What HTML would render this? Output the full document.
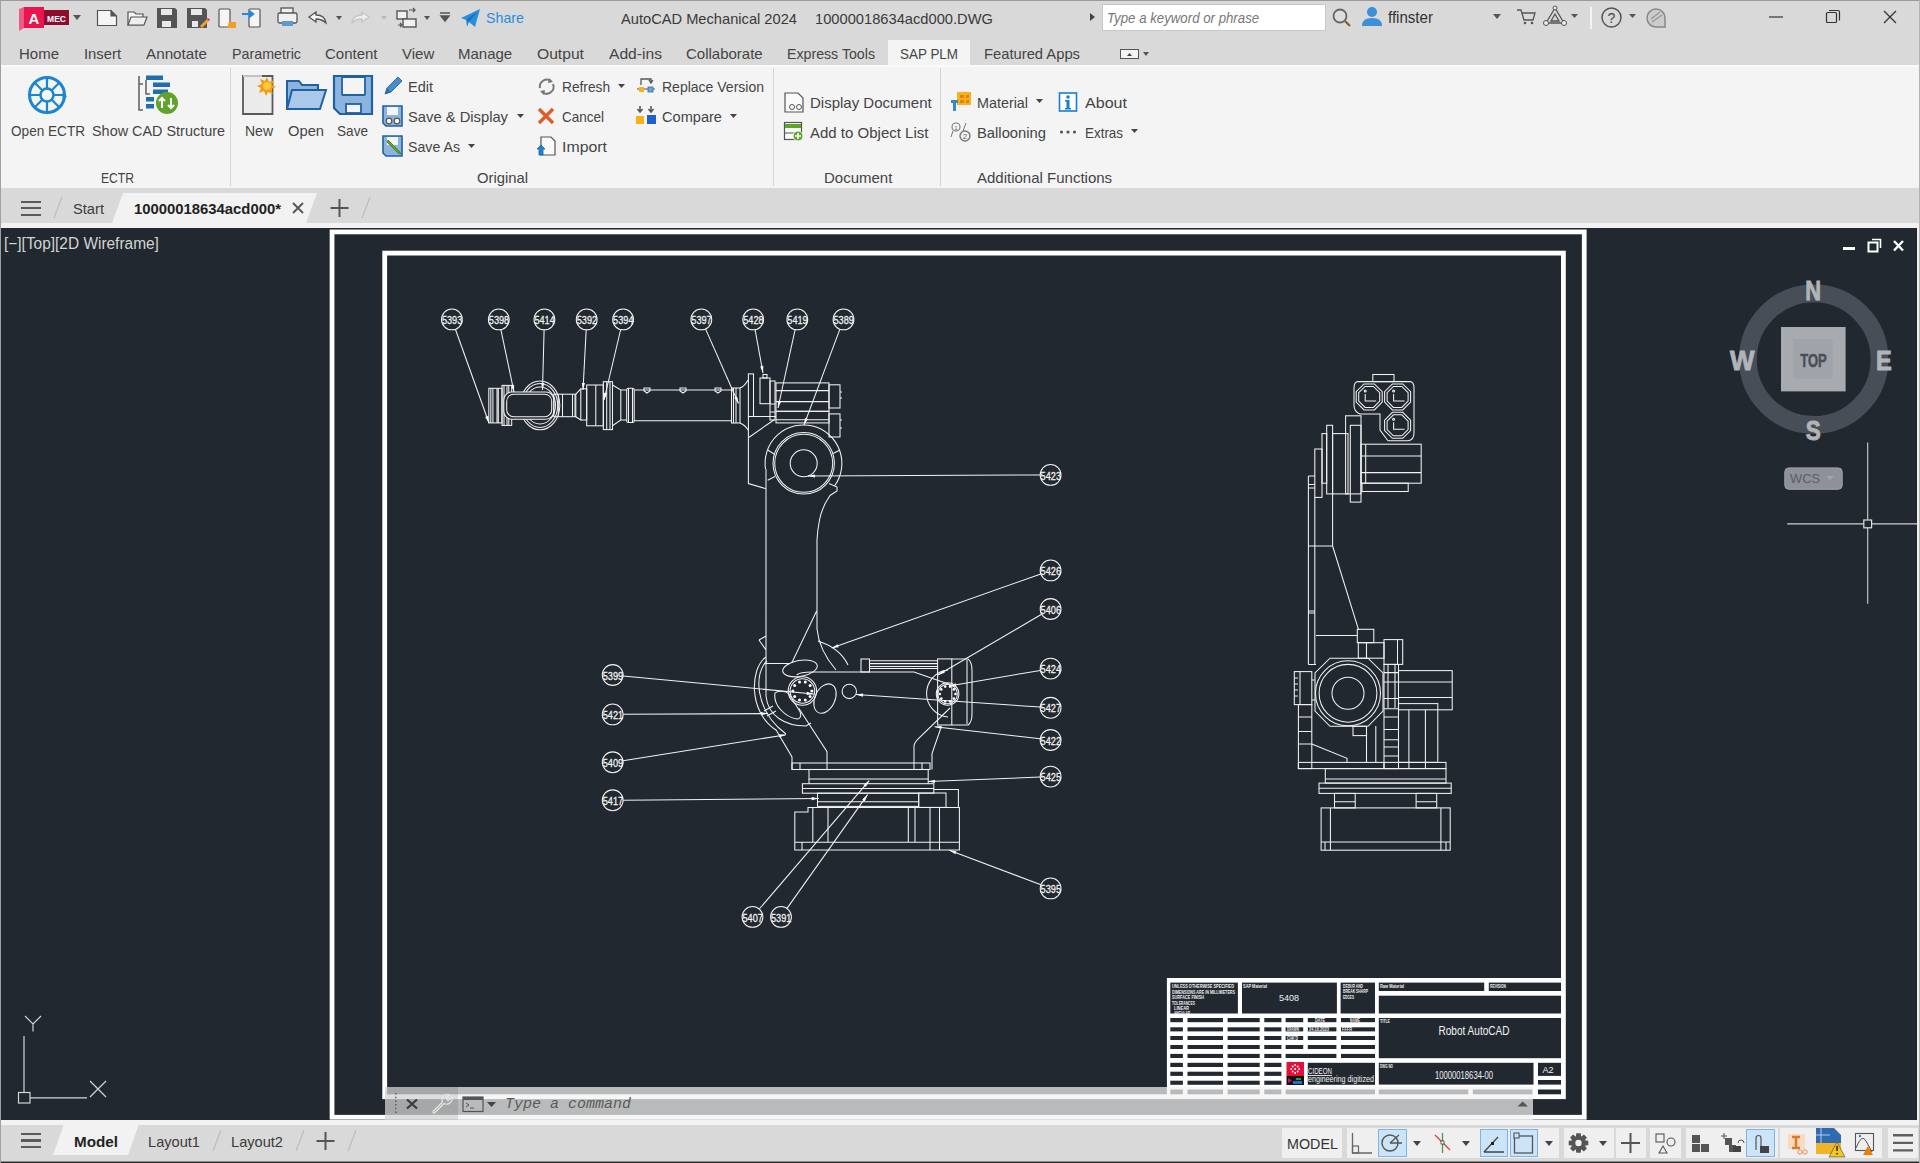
<!DOCTYPE html>
<html><head><meta charset="utf-8">
<style>
*{margin:0;padding:0;box-sizing:border-box}
html,body{width:1920px;height:1163px;overflow:hidden;background:#d9d9d9;font-family:"Liberation Sans",sans-serif}
.t{position:absolute;white-space:nowrap;line-height:1}
.blk{position:absolute}
.ic{position:absolute;overflow:visible}
</style></head><body>
<div class="blk" style="left:0;top:0;width:1920px;height:65px;background:#d9d9d9"></div><div class="blk" style="left:0;top:0;width:1920px;height:1px;background:#9a9a9a"></div><svg class="ic" style="left:18px;top:6px" width="66" height="26" viewBox="0 0 66 26">
<path d="M1 3 L6 1 L6 22 L1 25 Z" fill="#ef5b85"/>
<rect x="6" y="1" width="20" height="21" fill="#e8154f"/>
<rect x="26" y="4" width="25" height="15" fill="#8e0c2e"/>
<text x="16" y="17.5" font-family="Liberation Sans" font-weight="bold" font-size="15" fill="#fff" text-anchor="middle">A</text>
<text x="38.5" y="15.5" font-family="Liberation Sans" font-weight="bold" font-size="8.5" fill="#fff" text-anchor="middle">MEC</text>
<path d="M55 9 L63 9 L59 14 Z" fill="#555"/>
</svg><svg class="ic" style="left:90px;top:4px" width="460" height="30" viewBox="90 4 460 30">
<g stroke="#555" stroke-width="1.2" fill="#f5f5f5">
<path d="M97.5 10.5 H111 L116.5 16 V25.5 H97.5 Z"/>
<path d="M111 10.5 V16 H116.5" fill="#555"/>
<path d="M128 12 H134 L136 14 H143 V25 H128 Z" fill="#f5f5f5"/>
<path d="M128 25 L131 17 H147 L144 25 Z" fill="#eee"/>
</g>
<g fill="#555">
<path d="M157 8 H175 L177 10 V28 H157 Z"/>
<rect x="161" y="9" width="11" height="6" fill="#e9e9e9"/>
<rect x="162" y="21" width="9" height="6" fill="#e9e9e9"/>
<path d="M187 8 H205 L207 10 V28 H187 Z"/>
<rect x="191" y="9" width="11" height="6" fill="#e9e9e9"/>
<rect x="192" y="21" width="6" height="6" fill="#e9e9e9"/>
<path d="M200 26 L207 19 L209 21 L202 28 Z" fill="#f0a030"/>
<path d="M206 18 L209 21 L210 19 Z" fill="#e8154f"/>
</g>
<g stroke="#555" stroke-width="1.2" fill="#f5f5f5">
<rect x="219" y="9" width="11" height="18" rx="1"/>
<rect x="249" y="9" width="11" height="18" rx="1"/>
</g>
<path d="M229 22 H236 V28 H227 Z" fill="#f0a020"/>
<path d="M242 14 H252 M249 11 L253 14 L249 17" stroke="#1e88e5" stroke-width="2.2" fill="none"/>
<g stroke="#555" stroke-width="1.3" fill="#f0f0f0">
<rect x="281" y="8" width="12" height="6"/>
<rect x="278" y="13" width="19" height="10" rx="1.5"/>
</g>
<rect x="282" y="21" width="11" height="5" fill="#5b9bd5"/>
<path d="M309 17 L316 12 V15 Q325 15 326 23 Q322 19 316 19 V22 Z" stroke="#555" stroke-width="1.3" fill="#f5f5f5"/>
<path d="M336 16 H342 L339 20 Z" fill="#555"/>
<path d="M369 17 L362 12 V15 Q353 15 352 23 Q356 19 362 19 V22 Z" stroke="#c4c4c4" stroke-width="1.3" fill="#eee"/>
<path d="M381 16 H387 L384 20 Z" fill="#bbb"/>
<g stroke="#555" stroke-width="1.4" fill="#f0f0f0">
<rect x="397" y="11" width="10" height="8"/>
<rect x="403" y="19" width="13" height="8"/>
</g>
<path d="M409 10 H415 M413 8 L415 10 L413 12 M398 25 H402 M400 23 L402 25 L400 27" stroke="#555" stroke-width="1.2" fill="none"/>
<path d="M424 16 H430 L427 20 Z" fill="#555"/>
<path d="M440 13 H450 M441 16 H449 L445 21 Z" stroke="#555" stroke-width="1.5" fill="#555"/>
<path d="M461 18 L480 9 L475 27 L469 22 L467 27 L466 20 Z" fill="#2a8ee0"/>
<path d="M466 20 L478 11 L469 22" fill="#1f6fb5"/>
</g>
</svg><div class="t" style="left:486.0px;top:10.3px;font-size:15px;color:#2b8de0;font-family:'Liberation Sans',sans-serif;transform:scaleX(0.949);transform-origin:0 0;">Share</div>
<div class="t" style="left:621.0px;top:11.1px;font-size:15px;color:#3a3a3a;font-family:'Liberation Sans',sans-serif;transform:scaleX(0.977);transform-origin:0 0;">AutoCAD Mechanical 2024</div>
<div class="t" style="left:815.0px;top:11.1px;font-size:15px;color:#3a3a3a;font-family:'Liberation Sans',sans-serif;transform:scaleX(0.979);transform-origin:0 0;">10000018634acd000.DWG</div>
<svg class="ic" style="left:1088px;top:10px" width="10" height="14"><path d="M2 3 L7 7 L2 11 Z" fill="#444"/></svg><div class="blk" style="left:1102px;top:4px;width:224px;height:27px;background:#fff;border:1px solid #c8c8c8"></div><div class="t" style="left:1107.0px;top:11.1px;font-size:14px;color:#777;font-family:'Liberation Sans',sans-serif;font-style:italic;transform:scaleX(0.946);transform-origin:0 0;">Type a keyword or phrase</div>
<svg class="ic" style="left:1330px;top:5px" width="260" height="28" viewBox="1330 5 260 28">
<circle cx="1340" cy="16" r="6.5" stroke="#666" stroke-width="1.8" fill="#ddd"/>
<path d="M1345 21 L1350 26" stroke="#8a5a2a" stroke-width="2.2"/>
<circle cx="1372" cy="12" r="5" fill="#3d8fd6"/>
<path d="M1362 26 Q1362 18 1372 18 Q1382 18 1382 26 Z" fill="#3d8fd6"/>
<path d="M1493 14 H1501 L1497 19 Z" fill="#555"/>
<path d="M1517 10 H1521 L1524 20 H1533 L1535 13 H1522" stroke="#555" stroke-width="1.3" fill="none"/>
<circle cx="1525" cy="23" r="1.3" fill="#555"/><circle cx="1532" cy="23" r="1.3" fill="#555"/>
<path d="M1555 8 L1546 23 H1564 Z M1555 14 L1551 21 H1559 Z" stroke="#555" stroke-width="1.3" fill="none"/>
<circle cx="1555" cy="8" r="2" fill="#eee" stroke="#555"/><circle cx="1546" cy="23" r="2.5" fill="#eee" stroke="#555"/><circle cx="1564" cy="23" r="2.5" fill="#eee" stroke="#555"/>
<path d="M1571 14 H1578 L1574.5 18 Z" fill="#555"/>
</svg><div class="t" style="left:1388.0px;top:9.5px;font-size:16px;color:#333;font-family:'Liberation Sans',sans-serif;transform:scaleX(0.942);transform-origin:0 0;">ffinster</div>
<div class="blk" style="left:1590px;top:7px;width:2px;height:22px;background:#f2f2f2"></div><svg class="ic" style="left:1598px;top:4px" width="80" height="28" viewBox="1598 4 80 28">
<circle cx="1611.5" cy="17.5" r="9.5" stroke="#555" stroke-width="1.5" fill="none"/>
<text x="1611.5" y="22.5" font-family="Liberation Sans" font-size="14" fill="#444" text-anchor="middle">?</text>
<path d="M1629 14 H1636 L1632.5 18 Z" fill="#555"/>
<path d="M1647 18 A9 9 0 1 1 1665 18 V27 H1656 A9 9 0 0 1 1647 18 Z" stroke="#888" stroke-width="1.5" fill="#ccc"/>
<path d="M1651 19 L1660 12 M1652 22 L1662 15" stroke="#999" stroke-width="1.5"/>
</svg><svg class="ic" style="left:1760px;top:6px" width="150" height="24" viewBox="1760 6 150 24">
<path d="M1769 17 H1783" stroke="#333" stroke-width="1.2"/>
<rect x="1826.5" y="12.5" width="10" height="10" stroke="#333" stroke-width="1.2" fill="none" rx="1"/>
<path d="M1829 10.5 H1838 Q1839.5 10.5 1839.5 12 V20.5" stroke="#333" stroke-width="1.2" fill="none"/>
<path d="M1884 11 L1896 23 M1896 11 L1884 23" stroke="#333" stroke-width="1.3"/>
</svg><div class="blk" style="left:888px;top:40px;width:82px;height:26px;background:#f4f4f4"></div><div class="t" style="left:19.0px;top:45.8px;font-size:15px;color:#444;font-family:'Liberation Sans',sans-serif;">Home</div>
<div class="t" style="left:84.0px;top:45.8px;font-size:15px;color:#444;font-family:'Liberation Sans',sans-serif;transform:scaleX(0.986);transform-origin:0 0;">Insert</div>
<div class="t" style="left:146.0px;top:45.8px;font-size:15px;color:#444;font-family:'Liberation Sans',sans-serif;transform:scaleX(1.016);transform-origin:0 0;">Annotate</div>
<div class="t" style="left:232.0px;top:45.8px;font-size:15px;color:#444;font-family:'Liberation Sans',sans-serif;transform:scaleX(0.951);transform-origin:0 0;">Parametric</div>
<div class="t" style="left:325.0px;top:45.8px;font-size:15px;color:#444;font-family:'Liberation Sans',sans-serif;">Content</div>
<div class="t" style="left:402.0px;top:45.8px;font-size:15px;color:#444;font-family:'Liberation Sans',sans-serif;">View</div>
<div class="t" style="left:458.0px;top:45.8px;font-size:15px;color:#444;font-family:'Liberation Sans',sans-serif;">Manage</div>
<div class="t" style="left:537.0px;top:45.8px;font-size:15px;color:#444;font-family:'Liberation Sans',sans-serif;transform:scaleX(1.043);transform-origin:0 0;">Output</div>
<div class="t" style="left:609.0px;top:45.8px;font-size:15px;color:#444;font-family:'Liberation Sans',sans-serif;transform:scaleX(1.042);transform-origin:0 0;">Add-ins</div>
<div class="t" style="left:686.0px;top:45.8px;font-size:15px;color:#444;font-family:'Liberation Sans',sans-serif;">Collaborate</div>
<div class="t" style="left:787.0px;top:45.8px;font-size:15px;color:#444;font-family:'Liberation Sans',sans-serif;transform:scaleX(0.945);transform-origin:0 0;">Express Tools</div>
<div class="t" style="left:900.0px;top:45.8px;font-size:15px;color:#444;font-family:'Liberation Sans',sans-serif;transform:scaleX(0.896);transform-origin:0 0;">SAP PLM</div>
<div class="t" style="left:984.0px;top:45.8px;font-size:15px;color:#444;font-family:'Liberation Sans',sans-serif;transform:scaleX(0.984);transform-origin:0 0;">Featured Apps</div>
<svg class="ic" style="left:1118px;top:47px" width="36" height="14" viewBox="1118 46 36 14">
<rect x="1120.5" y="48.5" width="18" height="9" stroke="#555" stroke-width="1" fill="#f4f4f4"/>
<path d="M1127 55 L1129.5 52 L1132 55 Z" fill="#444"/>
<path d="M1143 51 H1149 L1146 55 Z" fill="#555"/>
</svg><div class="blk" style="left:0;top:65px;width:1920px;height:123px;background:#f4f4f4"></div><div class="blk" style="left:0;top:65px;width:1920px;height:2px;background:#fafafa"></div><div class="blk" style="left:230px;top:68px;width:1px;height:118px;background:#d4d4d4"></div><div class="blk" style="left:773px;top:68px;width:1px;height:118px;background:#d4d4d4"></div><div class="blk" style="left:940px;top:68px;width:1px;height:118px;background:#d4d4d4"></div><div class="t" style="left:10.5px;top:123.3px;font-size:15px;color:#444;font-family:'Liberation Sans',sans-serif;transform:scaleX(0.906);transform-origin:0 0;">Open ECTR</div>
<div class="t" style="left:92.0px;top:123.3px;font-size:15px;color:#444;font-family:'Liberation Sans',sans-serif;transform:scaleX(0.961);transform-origin:0 0;">Show CAD Structure</div>
<div class="t" style="left:101.0px;top:170.3px;font-size:15px;color:#444;font-family:'Liberation Sans',sans-serif;transform:scaleX(0.809);transform-origin:0 0;">ECTR</div>
<div class="t" style="left:245.0px;top:123.3px;font-size:15px;color:#444;font-family:'Liberation Sans',sans-serif;transform:scaleX(0.933);transform-origin:0 0;">New</div>
<div class="t" style="left:288.0px;top:123.3px;font-size:15px;color:#444;font-family:'Liberation Sans',sans-serif;transform:scaleX(0.981);transform-origin:0 0;">Open</div>
<div class="t" style="left:337.0px;top:123.3px;font-size:15px;color:#444;font-family:'Liberation Sans',sans-serif;transform:scaleX(0.907);transform-origin:0 0;">Save</div>
<div class="t" style="left:408.0px;top:78.8px;font-size:15px;color:#444;font-family:'Liberation Sans',sans-serif;transform:scaleX(0.967);transform-origin:0 0;">Edit</div>
<div class="t" style="left:408.0px;top:108.8px;font-size:15px;color:#444;font-family:'Liberation Sans',sans-serif;transform:scaleX(0.983);transform-origin:0 0;">Save &amp; Display</div>
<div class="t" style="left:408.0px;top:138.8px;font-size:15px;color:#444;font-family:'Liberation Sans',sans-serif;transform:scaleX(0.945);transform-origin:0 0;">Save As</div>
<div class="t" style="left:562.0px;top:78.8px;font-size:15px;color:#444;font-family:'Liberation Sans',sans-serif;transform:scaleX(0.914);transform-origin:0 0;">Refresh</div>
<div class="t" style="left:562.0px;top:108.8px;font-size:15px;color:#444;font-family:'Liberation Sans',sans-serif;transform:scaleX(0.900);transform-origin:0 0;">Cancel</div>
<div class="t" style="left:562.0px;top:138.8px;font-size:15px;color:#444;font-family:'Liberation Sans',sans-serif;transform:scaleX(1.058);transform-origin:0 0;">Import</div>
<div class="t" style="left:662.0px;top:78.8px;font-size:15px;color:#444;font-family:'Liberation Sans',sans-serif;transform:scaleX(0.934);transform-origin:0 0;">Replace Version</div>
<div class="t" style="left:662.0px;top:108.8px;font-size:15px;color:#444;font-family:'Liberation Sans',sans-serif;transform:scaleX(0.972);transform-origin:0 0;">Compare</div>
<div class="t" style="left:477.0px;top:170.3px;font-size:15px;color:#444;font-family:'Liberation Sans',sans-serif;transform:scaleX(0.987);transform-origin:0 0;">Original</div>
<div class="t" style="left:810.0px;top:94.8px;font-size:15px;color:#444;font-family:'Liberation Sans',sans-serif;">Display Document</div>
<div class="t" style="left:810.0px;top:124.8px;font-size:15px;color:#444;font-family:'Liberation Sans',sans-serif;">Add to Object List</div>
<div class="t" style="left:824.0px;top:170.3px;font-size:15px;color:#444;font-family:'Liberation Sans',sans-serif;">Document</div>
<div class="t" style="left:977.0px;top:94.8px;font-size:15px;color:#444;font-family:'Liberation Sans',sans-serif;transform:scaleX(0.956);transform-origin:0 0;">Material</div>
<div class="t" style="left:1085.0px;top:94.8px;font-size:15px;color:#444;font-family:'Liberation Sans',sans-serif;transform:scaleX(1.071);transform-origin:0 0;">About</div>
<div class="t" style="left:977.0px;top:124.8px;font-size:15px;color:#444;font-family:'Liberation Sans',sans-serif;transform:scaleX(0.985);transform-origin:0 0;">Ballooning</div>
<div class="t" style="left:1085.0px;top:124.8px;font-size:15px;color:#444;font-family:'Liberation Sans',sans-serif;transform:scaleX(0.894);transform-origin:0 0;">Extras</div>
<div class="t" style="left:977.0px;top:170.3px;font-size:15px;color:#444;font-family:'Liberation Sans',sans-serif;">Additional Functions</div>
<svg class="ic" style="left:0;top:65px" width="1200" height="123" viewBox="0 65 1200 123"><g stroke="#1a86d0" fill="none">
<circle cx="47" cy="95" r="17.5" stroke-width="3"/>
<circle cx="47" cy="95" r="6.5" stroke-width="2.5"/>
<path d="M47 77 V88 M47 102 V113 M29 95 H40 M54 95 H65 M34.5 82.5 L42 90 M52 100 L59.5 107.5 M59.5 82.5 L52 90 M42 100 L34.5 107.5" stroke-width="2.2"/>
</g>
<path d="M62 93 L67 96 L63 101 Z" fill="#1a86d0"/><g fill="#1f6fae">
<rect x="146" y="75.5" width="17" height="4.5"/>
<rect x="153" y="82.5" width="17" height="4.5"/>
<rect x="153" y="89.5" width="15" height="4.5"/>
<rect x="146" y="97" width="8" height="4.5"/>
<rect x="146" y="104" width="8" height="4.5"/>
</g>
<path d="M139 76 V110 H143 M139 84 H143 M146 80 V94 H150" stroke="#666" stroke-width="1.6" fill="none"/>
<circle cx="167" cy="103" r="11" fill="#5fa329"/>
<path d="M162 108 V98 M159 101 L162 98 L165 101 M171 98 V108 M168 105 L171 108 L174 105" stroke="#fff" stroke-width="2" fill="none"/><path d="M243 76 H272.5 V114 H243 Z" fill="#ebebeb" stroke="#5a5a5a" stroke-width="1.8"/>
<path d="M243 76 H262" stroke="#d0d0d0" stroke-width="1.8"/>
<path d="M267 77 L269 82 L274 80 L272 85 L276 87 L271 89 L273 94 L268 92 L266 96 L264 91 L259 93 L261 88 L257 86 L262 84 L260 79 L265 81 Z" fill="#f49b12"/>
<circle cx="267" cy="86" r="4" fill="#fcc93d"/><path d="M287 85 V109 H318 V85 H302 L299 81 H287 Z" fill="#8db4df" stroke="#1f62a3" stroke-width="2"/>
<path d="M287 109 L292 90 H326 L320 109 Z" fill="#a9c8ea" stroke="#1f62a3" stroke-width="2"/><path d="M334 76 H372 V114 H340 L334 108 Z" fill="#8db4df" stroke="#1f62a3" stroke-width="2.2"/>
<rect x="342" y="77" width="23" height="18" fill="#f4f4f4" stroke="#1f62a3" stroke-width="1.8" rx="1"/>
<rect x="346" y="104" width="15" height="9" fill="#f4f4f4" stroke="#1f62a3" stroke-width="1.8"/><path d="M385 94 L387 88 L398 77 L402 81 L391 92 Z" fill="#4a8ccb" stroke="#2c6fae" stroke-width="1"/>
<path d="M385 94 L387 88 L391 92 Z" fill="#2c6fae"/><path d="M383 106 H402 V126 H386 L383 123 Z" fill="#8db4df" stroke="#1f62a3" stroke-width="1.6"/>
<rect x="387" y="107" width="11" height="8" fill="#f4f4f4"/>
<circle cx="389" cy="121" r="2.8" fill="#f4f4f4" stroke="#555" stroke-width="1.2"/><circle cx="397" cy="121" r="2.8" fill="#f4f4f4" stroke="#555" stroke-width="1.2"/><path d="M517 114 H524 L520.5 118 Z" fill="#444"/><path d="M383 136 H402 V156 H386 L383 153 Z" fill="#8db4df" stroke="#1f62a3" stroke-width="1.6"/>
<rect x="387" y="137" width="11" height="8" fill="#f4f4f4"/>
<path d="M388 140 L399 151 L401 154 L398 153 L387 142 Z" fill="#5fa329" stroke="#3e7a1a" stroke-width="0.8"/><path d="M468 144 H475 L471.5 148 Z" fill="#444"/><path d="M540 88 A7 7 0 0 1 551 81 M553 84 A7 7 0 0 1 542 92" stroke="#777" stroke-width="2" fill="none"/>
<path d="M549 78 L553 82 L548 83 Z M544 95 L540 91 L545 90 Z" fill="#777"/><path d="M618 84 H625 L621.5 88 Z" fill="#444"/><path d="M539 109 L553 123 M553 109 L539 123" stroke="#e05a28" stroke-width="3.2"/><path d="M541 137 H551 L555 141 V155 H541 Z" fill="#fafafa" stroke="#555" stroke-width="1.2"/>
<path d="M537 149 L541 145 L545 149 H543 V155 H539 V149 Z" fill="#1f86cc" stroke="#1662a3" stroke-width="0.8"/><path d="M641 85 V79 H651 V82 M649 80 L651 83 L653 80" stroke="#555" stroke-width="1.3" fill="none"/>
<path d="M637 89 H655" stroke="#555" stroke-width="1"/>
<rect x="639" y="87" width="5" height="5" fill="#f6b21a"/>
<rect x="648" y="87" width="5" height="5" fill="#6aa6cf" stroke="#2c6fae" stroke-width="0.8"/><path d="M640 106 V111 M637.5 109 L640 112 L642.5 109 M651 106 V111 M648.5 109 L651 112 L653.5 109" stroke="#555" stroke-width="1.5" fill="none"/>
<rect x="636" y="116" width="8" height="8" fill="#f6b21a"/>
<rect x="647" y="115" width="9" height="9" fill="#1f5fcf"/><path d="M730 114 H737 L733.5 118 Z" fill="#444"/><path d="M785 93 H798 L803 98 V112 H785 Z" fill="#fafafa" stroke="#555" stroke-width="1.2"/>
<circle cx="792" cy="107" r="2.5" fill="none" stroke="#555" stroke-width="1"/><circle cx="799" cy="107" r="2.5" fill="none" stroke="#555" stroke-width="1"/><rect x="784.5" y="122.5" width="17" height="17" fill="#fafafa" stroke="#555" stroke-width="1.2"/>
<rect x="785" y="124" width="16" height="4" fill="#5fa329"/>
<path d="M785 133 H795" stroke="#555" stroke-width="1"/>
<circle cx="798" cy="136" r="5" fill="#5fa329" stroke="#fafafa" stroke-width="1"/>
<path d="M798 133 V139 M795 136 H801" stroke="#fff" stroke-width="1.6"/><rect x="957" y="92" width="14" height="13" fill="#f6b21a"/>
<path d="M960 95 H964 V98 H960 Z M966 95 H969 V98 H966 Z M960 100 H964 V103 H960 Z M966 100 H969 V103 H966 Z" fill="#e57e14"/>
<path d="M951 100 H958 V103 H956 V111 H953 V103 H951 Z" fill="#3a86c8"/><path d="M1036 99 H1043 L1039.5 103 Z" fill="#444"/><rect x="1059.5" y="93" width="17" height="18" fill="#fff" stroke="#1a7fd0" stroke-width="1.6"/>
<circle cx="1068" cy="97" r="1.8" fill="#1a7fd0"/>
<path d="M1065 100 H1069.5 V108 H1071 V109.5 H1065 V108 H1066.5 V101.5 H1065 Z" fill="#1a7fd0"/><circle cx="956" cy="127" r="4" fill="none" stroke="#777" stroke-width="1.1"/>
<circle cx="965" cy="136" r="5" fill="none" stroke="#777" stroke-width="1.4"/>
<path d="M953 131 L951 137 M966 123 L963 131" stroke="#777" stroke-width="1"/>
<text x="956" y="130" font-size="6" fill="#666" text-anchor="middle" font-family="Liberation Sans">1</text>
<text x="965" y="139" font-size="8" fill="#666" text-anchor="middle" font-family="Liberation Sans">2</text><circle cx="1061.5" cy="132" r="1.6" fill="#555"/><circle cx="1068" cy="132" r="1.6" fill="#555"/><circle cx="1074.5" cy="132" r="1.6" fill="#555"/><path d="M1131 129 H1138 L1134.5 133 Z" fill="#444"/></svg><div class="blk" style="left:0;top:228px;width:1920px;height:892px;background:#212830"></div><div class="blk" style="left:0;top:228px;width:1px;height:892px;background:#9a9a9a"></div><div class="t" style="left:4.0px;top:236.1px;font-size:16px;color:#d4d4d4;font-family:'Liberation Sans',sans-serif;transform:scaleX(0.965);transform-origin:0 0;">[−][Top][2D Wireframe]</div>
<svg class="ic" style="left:0;top:228px" width="1920" height="892" viewBox="0 228 1920 892"><style>.l{fill:none;stroke:#f2f2f2;stroke-width:1.05}.bn{font-family:"Liberation Sans",sans-serif;font-size:11.8px;fill:#f2f2f2;stroke:#f2f2f2;stroke-width:0.3;text-anchor:middle}.f{fill:#fff}</style><rect x="332.05" y="231.9" width="1252.2" height="885.35" fill="none" stroke="#fff" stroke-width="4.75"/><rect x="384.7" y="253.1" width="1178.7" height="843.6" fill="none" stroke="#fff" stroke-width="4.8"/><circle cx="451.9" cy="319.4" r="10.4" class="l"/><text x="452.09999999999997" y="324.0" class="bn" textLength="20.4" lengthAdjust="spacingAndGlyphs">5393</text><path d="M455.4 329.2 L489.0 423.0" class="l"/><path d="M489.0 423.0 L485.1 416.9 L488.1 415.9 Z" fill="#fff"/><circle cx="498.8" cy="319.4" r="10.4" class="l"/><text x="499.0" y="324.0" class="bn" textLength="20.4" lengthAdjust="spacingAndGlyphs">5398</text><path d="M500.9 329.6 L514.0 392.0" class="l"/><path d="M514.0 392.0 L511.0 385.5 L514.1 384.8 Z" fill="#fff"/><circle cx="544.4" cy="319.4" r="10.4" class="l"/><text x="544.6" y="324.0" class="bn" textLength="20.4" lengthAdjust="spacingAndGlyphs">5414</text><path d="M544.1 329.8 L542.5 390.0" class="l"/><path d="M542.5 390.0 L541.1 383.0 L544.3 383.0 Z" fill="#fff"/><circle cx="586.7" cy="319.4" r="10.4" class="l"/><text x="586.9000000000001" y="324.0" class="bn" textLength="20.4" lengthAdjust="spacingAndGlyphs">5392</text><path d="M586.2 329.8 L583.0 390.0" class="l"/><path d="M583.0 390.0 L581.8 382.9 L585.0 383.1 Z" fill="#fff"/><circle cx="623.1" cy="319.4" r="10.4" class="l"/><text x="623.3000000000001" y="324.0" class="bn" textLength="20.4" lengthAdjust="spacingAndGlyphs">5394</text><path d="M620.7 329.5 L604.0 400.0" class="l"/><path d="M604.0 400.0 L604.1 392.8 L607.2 393.6 Z" fill="#fff"/><circle cx="701.3" cy="319.4" r="10.4" class="l"/><text x="701.5" y="324.0" class="bn" textLength="20.4" lengthAdjust="spacingAndGlyphs">5397</text><path d="M705.5 328.9 L738.5 403.5" class="l"/><path d="M738.5 403.5 L734.2 397.7 L737.1 396.5 Z" fill="#fff"/><circle cx="753.2" cy="319.4" r="10.4" class="l"/><text x="753.4000000000001" y="324.0" class="bn" textLength="20.4" lengthAdjust="spacingAndGlyphs">5428</text><path d="M755.1 329.6 L763.0 373.0" class="l"/><path d="M763.0 373.0 L760.2 366.4 L763.3 365.8 Z" fill="#fff"/><circle cx="797.3" cy="319.4" r="10.4" class="l"/><text x="797.5" y="324.0" class="bn" textLength="20.4" lengthAdjust="spacingAndGlyphs">5419</text><path d="M795.1 329.6 L778.0 408.0" class="l"/><path d="M778.0 408.0 L777.9 400.8 L781.1 401.5 Z" fill="#fff"/><circle cx="843.5" cy="319.4" r="10.4" class="l"/><text x="843.7" y="324.0" class="bn" textLength="20.4" lengthAdjust="spacingAndGlyphs">5389</text><path d="M839.9 329.1 L804.0 425.0" class="l"/><path d="M804.0 425.0 L805.0 417.9 L808.0 419.0 Z" fill="#fff"/><circle cx="1050.6" cy="474.9" r="10.4" class="l"/><text x="1050.8" y="479.5" class="bn" textLength="20.4" lengthAdjust="spacingAndGlyphs">5423</text><path d="M1040.2 474.9 L808.0 476.0" class="l"/><path d="M808.0 476.0 L815.0 474.4 L815.0 477.6 Z" fill="#fff"/><circle cx="1050.6" cy="570.4" r="10.4" class="l"/><text x="1050.8" y="575.0" class="bn" textLength="20.4" lengthAdjust="spacingAndGlyphs">5426</text><path d="M1040.8 573.9 L831.6 648.0" class="l"/><path d="M831.6 648.0 L837.7 644.2 L838.7 647.2 Z" fill="#fff"/><circle cx="1050.6" cy="609" r="10.4" class="l"/><text x="1050.8" y="613.6" class="bn" textLength="20.4" lengthAdjust="spacingAndGlyphs">5406</text><path d="M1041.6 614.3 L938.0 675.0" class="l"/><path d="M938.0 675.0 L943.2 670.1 L944.8 672.8 Z" fill="#fff"/><circle cx="1050.6" cy="668.6" r="10.4" class="l"/><text x="1050.8" y="673.2" class="bn" textLength="20.4" lengthAdjust="spacingAndGlyphs">5424</text><path d="M1040.3 670.4 L949.0 686.0" class="l"/><path d="M949.0 686.0 L955.6 683.2 L956.2 686.4 Z" fill="#fff"/><circle cx="1050.6" cy="707.8" r="10.4" class="l"/><text x="1050.8" y="712.4" class="bn" textLength="20.4" lengthAdjust="spacingAndGlyphs">5427</text><path d="M1040.2 707.1 L856.0 694.6" class="l"/><path d="M856.0 694.6 L863.1 693.5 L862.9 696.7 Z" fill="#fff"/><circle cx="1050.6" cy="740" r="10.4" class="l"/><text x="1050.8" y="744.6" class="bn" textLength="20.4" lengthAdjust="spacingAndGlyphs">5422</text><path d="M1040.3 738.8 L934.6 726.7" class="l"/><path d="M934.6 726.7 L941.7 725.9 L941.4 729.1 Z" fill="#fff"/><circle cx="1050.6" cy="776.6" r="10.4" class="l"/><text x="1050.8" y="781.2" class="bn" textLength="20.4" lengthAdjust="spacingAndGlyphs">5425</text><path d="M1040.2 777.0 L928.0 781.6" class="l"/><path d="M928.0 781.6 L934.9 779.7 L935.1 782.9 Z" fill="#fff"/><circle cx="1050.6" cy="888.4" r="10.4" class="l"/><text x="1050.8" y="893.0" class="bn" textLength="20.4" lengthAdjust="spacingAndGlyphs">5395</text><path d="M1040.9 884.7 L949.3 850.2" class="l"/><path d="M949.3 850.2 L956.4 851.2 L955.3 854.2 Z" fill="#fff"/><circle cx="612.7" cy="675" r="10.4" class="l"/><text x="612.9000000000001" y="679.6" class="bn" textLength="20.4" lengthAdjust="spacingAndGlyphs">5399</text><path d="M623.1 676.0 L813.7 694.0" class="l"/><path d="M813.7 694.0 L806.6 694.9 L806.9 691.7 Z" fill="#fff"/><circle cx="612.7" cy="714.4" r="10.4" class="l"/><text x="612.9000000000001" y="719.0" class="bn" textLength="20.4" lengthAdjust="spacingAndGlyphs">5421</text><path d="M623.1 714.3 L768.0 713.6" class="l"/><path d="M768.0 713.6 L761.0 715.2 L761.0 712.0 Z" fill="#fff"/><circle cx="612.7" cy="762.3" r="10.4" class="l"/><text x="612.9000000000001" y="766.9" class="bn" textLength="20.4" lengthAdjust="spacingAndGlyphs">5409</text><path d="M623.0 760.7 L786.0 734.8" class="l"/><path d="M786.0 734.8 L779.3 737.5 L778.8 734.3 Z" fill="#fff"/><circle cx="612.7" cy="800.3" r="10.4" class="l"/><text x="612.9000000000001" y="804.9" class="bn" textLength="20.4" lengthAdjust="spacingAndGlyphs">5417</text><path d="M623.1 800.2 L818.6 798.6" class="l"/><path d="M818.6 798.6 L811.6 800.3 L811.6 797.1 Z" fill="#fff"/><circle cx="752.5" cy="916.9" r="10.4" class="l"/><text x="752.7" y="921.5" class="bn" textLength="20.4" lengthAdjust="spacingAndGlyphs">5407</text><path d="M759.3 909.0 L869.2 780.6" class="l"/><path d="M869.2 780.6 L865.9 787.0 L863.4 784.9 Z" fill="#fff"/><circle cx="781" cy="916.9" r="10.4" class="l"/><text x="781.2" y="921.5" class="bn" textLength="20.4" lengthAdjust="spacingAndGlyphs">5391</text><path d="M787.0 908.4 L867.6 794.6" class="l"/><path d="M867.6 794.6 L864.9 801.2 L862.2 799.4 Z" fill="#fff"/><rect x="488.8" y="388.3" width="13.20" height="34.60" class="l" /><path d="M490.8 388.3 V422.9 M492.9 388.3 V422.9 M497 388.3 V422.9 M498.3 388.3 V422.9 " class="l"/><rect x="502" y="385.4" width="9.70" height="40.00" class="l" /><path d="M504 385.4 V425.4 M507 385.4 V425.4 M508.8 385.4 V425.4 " class="l"/><ellipse cx="540" cy="405.4" rx="19.8" ry="24.4" class="l"/><ellipse cx="540" cy="405.4" rx="17.7" ry="22" class="l"/><ellipse cx="540" cy="405.4" rx="15.5" ry="18.5" class="l"/><rect x="503.8" y="392" width="50" height="27.2" rx="8" fill="#212830" stroke="#f2f2f2" stroke-width="1.05"/><rect x="506.7" y="394.2" width="45" height="22.5" rx="7" class="l"/><rect x="553.8" y="394.2" width="22.00" height="22.50" class="l" /><path d="M558.3 394.2 V416.7 M562.5 394.2 V416.7 M572.5 394.2 V416.7 M575 394.2 V416.7 M575.8 394.2 L580.8 388.8 M575.8 416.7 L580.8 420" class="l"/><rect x="580.8" y="388.8" width="5.90" height="31.20" class="l" /><rect x="586.7" y="385" width="16.60" height="40.80" class="l" /><path d="M595.8 385 V425.8 " class="l"/><rect x="603.3" y="381.7" width="9.20" height="47.90" class="l" /><path d="M606.7 381.7 V429.6 M610 381.7 V429.6 M612.5 385 L620.8 390 V420 L612.5 425.8 M620.8 390 H626.7 M620.8 420 H626.7" class="l"/><rect x="626.7" y="388.3" width="7.5" height="34.2" rx="1.5" class="l"/><path d="M628.5 388.3 V422.5 M632.5 388.3 V422.5" class="l"/><path d="M634.2 390 H731.5 M634.2 420.8 H731.5" class="l"/><path d="M644 388 H650 V391 L647 393 L644 391 Z" class="l"/><path d="M680 388 H686 V391 L683 393 L680 391 Z" class="l"/><path d="M715 388 H721 V391 L718 393 L715 391 Z" class="l"/><rect x="731.5" y="388" width="8.50" height="35.00" class="l" /><path d="M733.5 388 V423 M736 388 V423 M740 388 Q745 386 748 380 M740 423 Q745 425 748 430" class="l"/><rect x="748.4" y="373.9" width="5.10" height="42.60" class="l" /><rect x="760" y="378" width="10.00" height="25.70" class="l" /><rect x="763" y="374.5" width="4.00" height="3.50" class="l" /><rect x="770" y="381" width="5.00" height="39.00" class="l" /><path d="M770 412 H775 M770 404 H775" class="l"/><rect x="776" y="382.9" width="53.00" height="28.40" class="l" /><path d="M776 390.6 H829 M776 401.6 H829" class="l"/><rect x="776" y="411.3" width="53.00" height="11.60" class="l" /><path d="M776 419.7 H829" class="l"/><rect x="829" y="384.8" width="11.00" height="23.20" class="l" /><rect x="829" y="413.9" width="11.00" height="23.10" class="l" /><path d="M840 392 H842 M840 398 H842 M840 420 H842 M840 428 H842" class="l"/><path d="M748.4 416.5 H776 M748.4 416.5 V483.5 L765.8 488.7 M748.4 437.7 L774.2 419.7" class="l"/><path d="M765.5 469 A38.4 38.4 0 1 1 834.5 486" class="l"/><circle cx="803.7" cy="463.3" r="30.7" class="l"/><circle cx="803.7" cy="463.3" r="29" class="l"/><circle cx="803.7" cy="463.3" r="13.5" class="l"/><path d="M767.7 450 L774.8 454.5 M767.7 480.3 L775 476.5 M840 450 L833 453.5" class="l"/><path d="M766 469 V663 M829 483.5 L837 487 L837 491 L830 495.5 Q822 507 819.5 520 Q817.5 530 817 540 V629 Q819 650 836 670 M816.5 611.3 L791.7 663 M759 640 L766 636 M759 640 L766 650" class="l"/><path d="M818 641 Q840 648 848 665" class="l"/><path d="M796.7 675 Q800 672 811.9 672 H914 L949.9 684.4" class="l"/><circle cx="802.4" cy="691" r="14.2" class="l"/><circle cx="802.4" cy="691" r="12.3" class="l"/><circle cx="811.9" cy="691.0" r="1.5" class="f"/><circle cx="810.1" cy="696.6" r="1.5" class="f"/><circle cx="805.3" cy="700.0" r="1.5" class="f"/><circle cx="799.5" cy="700.0" r="1.5" class="f"/><circle cx="794.7" cy="696.6" r="1.5" class="f"/><circle cx="792.9" cy="691.0" r="1.5" class="f"/><circle cx="794.7" cy="685.4" r="1.5" class="f"/><circle cx="799.5" cy="682.0" r="1.5" class="f"/><circle cx="805.3" cy="682.0" r="1.5" class="f"/><circle cx="810.1" cy="685.4" r="1.5" class="f"/><ellipse cx="825" cy="698.6" rx="10" ry="15.5" transform="rotate(25 825 698.6)" class="l"/><circle cx="849.3" cy="691.4" r="7.2" class="l"/><path d="M948 670 A23.6 23.6 0 0 0 948 717" class="l"/><circle cx="947.6" cy="694" r="11.3" class="l"/><circle cx="947.6" cy="694" r="9.8" class="l"/><circle cx="955.4" cy="694.0" r="1.3" class="f"/><circle cx="953.9" cy="698.6" r="1.3" class="f"/><circle cx="950.0" cy="701.4" r="1.3" class="f"/><circle cx="945.2" cy="701.4" r="1.3" class="f"/><circle cx="941.3" cy="698.6" r="1.3" class="f"/><circle cx="939.8" cy="694.0" r="1.3" class="f"/><circle cx="941.3" cy="689.4" r="1.3" class="f"/><circle cx="945.2" cy="686.6" r="1.3" class="f"/><circle cx="950.0" cy="686.6" r="1.3" class="f"/><circle cx="953.9" cy="689.4" r="1.3" class="f"/><rect x="937.6" y="658.9" width="14.20" height="66.10" class="l" /><path d="M951.8 658.9 H968 Q972 662 972 670 V714 Q972 722 968 725 H951.8 M967 660 V724" class="l"/><rect x="861" y="659" width="8.50" height="13.00" class="l" /><path d="M869.5 660.8 H937.6 M869.5 663.6 H937.6 M869.5 666.5 H937.6 M869.5 668.4 H937.6" class="l"/><ellipse cx="800" cy="668.4" rx="17.5" ry="8" transform="rotate(-10 800 668.4)" class="l"/><path d="M766 657 C750 668 748 712 776 730 M767 661 C754 672 754 710 786 734 M775 693 C773 705 785 717 797 719 C801 719 802 714 799 710 L789 694 C786 691 778 690 775 693 Z M766 663 V696 C768 716 785 726 806 726 L811 723 M766 663.5 H790 M764 711 L773 706 M767 716 L776 711" class="l"/><path d="M798.6 708 L827 751.6 V769.5 M776 729.8 L792 757 V769.5 M950 708 L918.7 738.3 Q914 743 914 746 V769.5 M940.5 729 L932 753.5 V769.5" class="l"/><rect x="792" y="763" width="138.00" height="6.50" class="l" /><path d="M800 763 V769.5 M922 763 V769.5" class="l"/><rect x="809" y="769.5" width="119.20" height="9.50" class="l" /><rect x="802.4" y="783.7" width="131.40" height="9.50" class="l" /><path d="M802.4 788.5 H933.8 M809 779 V783.7 M928.2 779 V783.7" class="l"/><rect x="817.5" y="793.2" width="101.20" height="13.20" class="l" /><path d="M817.5 801.7 H918.7" class="l"/><rect x="918.7" y="793" width="27.30" height="14.40" class="l" /><path d="M933.8 789.4 H958.4 V807.4" class="l"/><path d="M794.8 812 H808 V807.4 H959.4 V850 H794.8 Z M794.8 842.3 H959.4 M812.8 807.4 V842.3 M828 807.4 V842.3 M908.3 807.4 V842.3 M915 807.4 V842.3 M930 807.4 V850 M939.5 807.4 V850 M802 842.3 V850" class="l"/><path d="M1358 381.6 H1410 Q1414 382 1414 388 V433 Q1414 440 1408 440.7 H1388 L1380 430 V414 H1360 Q1354 412 1354 405 V388 Q1354 382 1358 381.6 Z" class="l"/><rect x="1372.8" y="374.5" width="21.20" height="7.10" class="l" /><path d="M1364.0 383.9 H1374.4 L1382.2 391.7 V402.09999999999997 L1374.4 409.9 H1364.0 L1356.2 402.09999999999997 V391.7 Z" class="l"/><path d="M1365.0 386.4 H1373.4 L1379.7 392.7 V401.09999999999997 L1373.4 407.4 H1365.0 L1358.7 401.09999999999997 V392.7 Z" class="l"/><circle cx="1365.2" cy="390.9" r="1" class="l"/><path d="M1365.2 393.9 V400.9 H1376.2" class="l"/><path d="M1392.3999999999999 383.9 H1402.8 L1410.6 391.7 V402.09999999999997 L1402.8 409.9 H1392.3999999999999 L1384.6 402.09999999999997 V391.7 Z" class="l"/><path d="M1393.3999999999999 386.4 H1401.8 L1408.1 392.7 V401.09999999999997 L1401.8 407.4 H1393.3999999999999 L1387.1 401.09999999999997 V392.7 Z" class="l"/><circle cx="1393.6" cy="390.9" r="1" class="l"/><path d="M1393.6 393.9 V400.9 H1404.6" class="l"/><path d="M1392.3999999999999 412.3 H1402.8 L1410.6 420.1 V430.5 L1402.8 438.3 H1392.3999999999999 L1384.6 430.5 V420.1 Z" class="l"/><path d="M1393.3999999999999 414.8 H1401.8 L1408.1 421.1 V429.5 L1401.8 435.8 H1393.3999999999999 L1387.1 429.5 V421.1 Z" class="l"/><circle cx="1393.6" cy="419.3" r="1" class="l"/><path d="M1393.6 422.3 V429.3 H1404.6" class="l"/><rect x="1326.7" y="425.3" width="5.90" height="68.60" class="l" /><rect x="1322" y="433.6" width="4.70" height="49.60" class="l" /><rect x="1314.8" y="449" width="7.20" height="48.40" class="l" /><rect x="1332.6" y="433.6" width="15.40" height="60.30" class="l" /><rect x="1345.6" y="415.8" width="15.40" height="78.10" class="l" /><rect x="1350.3" y="425.3" width="10.70" height="76.80" class="l" /><rect x="1361" y="444.2" width="60.20" height="39.00" class="l" /><path d="M1361 456 H1421.2 M1361 472.6 H1421.2 M1365.7 444.2 V483.2" class="l"/><rect x="1362" y="483.2" width="46.20" height="8.30" class="l" /><path d="M1308.4 476 V664.4 M1308.4 476 H1314.8 M1314.8 497.4 V664 M1308.4 484.4 H1314.8 M1308.4 488 H1314.8 M1332.6 493.9 V545.9 H1308.4 M1332.6 546 L1358.6 629.8 M1308.4 611 H1314.8 M1308.4 613 H1314.8" class="l"/><path d="M1316 635.5 H1357.3 M1308.4 664.4 H1316" class="l"/><rect x="1357.3" y="629.3" width="16.50" height="13.40" class="l" /><rect x="1358.3" y="642.7" width="8.20" height="15.50" class="l" /><rect x="1366.5" y="642.7" width="17.50" height="15.50" class="l" /><rect x="1384" y="639.6" width="18.70" height="24.80" class="l" /><path d="M1397.5 639.6 V664.4" class="l"/><path d="M1330 658.2 H1368 L1383 673 V711 L1368 726.3 H1330 L1315 711 V673 Z" class="l"/><circle cx="1348" cy="693.3" r="32.5" class="l"/><circle cx="1348" cy="693.3" r="28.9" class="l"/><circle cx="1348" cy="693.3" r="16" class="l"/><rect x="1294.3" y="671.6" width="17.50" height="33.00" class="l" /><path d="M1294.3 678 H1298 M1294.3 684 H1298 M1294.3 690 H1298 M1294.3 696 H1298 M1300 671.6 V704.6 M1311.8 680 H1315 M1311.8 700 H1315" class="l"/><rect x="1298.4" y="704.6" width="13.40" height="64.00" class="l" /><path d="M1298.4 717 H1311.8 M1298.4 731.5 H1311.8 M1298.4 743.9 H1311.8 M1311.8 743.9 L1347 758.3 V762.4" class="l"/><rect x="1353" y="726.3" width="13.50" height="9.30" class="l" /><path d="M1366.5 726 V762.4 M1375.8 726 V762.4" class="l"/><rect x="1384" y="664.4" width="14.50" height="104.20" class="l" /><path d="M1384 672.6 H1398.5 M1384 682 H1398.5 M1384 698.4 H1398.5 M1384 708.8 H1398.5 M1384 717 H1398.5 M1384 729.4 H1398.5 M1384 739.7 H1398.5 M1384 747 H1398.5 M1384 756 H1398.5 M1388 664.4 V708 M1395 664.4 V708" class="l"/><rect x="1398.5" y="670.6" width="53.70" height="39.20" class="l" /><path d="M1398.5 682 H1452.2 M1398.5 697.4 H1452.2" class="l"/><rect x="1398.5" y="703.6" width="39.30" height="58.80" class="l" /><path d="M1408.9 709.8 V762.4 M1425.4 709.8 V762.4" class="l"/><rect x="1298.4" y="762.4" width="147.60" height="6.20" class="l" /><path d="M1384 762.4 V768.6 M1408.9 762.4 V768.6 M1425.4 762.4 V768.6" class="l"/><rect x="1325.3" y="768.6" width="120.70" height="14.50" class="l" /><path d="M1325.3 779 H1446" class="l"/><rect x="1319" y="783.1" width="132.20" height="10.30" class="l" /><path d="M1319 788.2 H1451.2" class="l"/><rect x="1334.5" y="793.4" width="20.70" height="14.50" class="l" /><rect x="1416.1" y="793.4" width="20.60" height="14.50" class="l" /><path d="M1334.5 801.7 H1355.2 M1416.1 801.7 H1436.7" class="l"/><rect x="1321.1" y="807.9" width="129.10" height="42.30" class="l" /><path d="M1330.4 807.9 V850.2 M1440.9 807.9 V850.2 M1321.1 841.9 H1450.2 M1325 841.9 V850.2 M1446 841.9 V850.2" class="l"/></svg><svg class="ic" style="left:0;top:228px" width="1920" height="892" viewBox="0 228 1920 892"><rect x="1166.9" y="978" width="397" height="118" fill="#fff"/><rect x="1170.3" y="982.6" width="67.6" height="30.9" fill="#212830"/><rect x="1242" y="982.6" width="94.9" height="30.9" fill="#212830"/><rect x="1340.6" y="982.6" width="34.4" height="30.9" fill="#212830"/><rect x="1378.8" y="982.6" width="105.4" height="8.4" fill="#212830"/><rect x="1488.8" y="982.6" width="72.2" height="8.4" fill="#212830"/><rect x="1378.8" y="995.7" width="182.2" height="17.8" fill="#212830"/><rect x="1378.8" y="1018" width="182.2" height="40.2" fill="#212830"/><rect x="1378.8" y="1062.8" width="154.7" height="21.8" fill="#212830"/><rect x="1538" y="1062.8" width="23.0" height="13.1" fill="#212830"/><rect x="1538" y="1080" width="23.0" height="4.6" fill="#212830"/><rect x="1170.3" y="1018" width="12.6" height="4.2" fill="#212830"/><rect x="1187.5" y="1018" width="35.5" height="4.2" fill="#212830"/><rect x="1227.6" y="1018" width="32.1" height="4.2" fill="#212830"/><rect x="1264.3" y="1018" width="17.1" height="4.2" fill="#212830"/><rect x="1285.6" y="1018" width="17.6" height="4.2" fill="#212830"/><rect x="1307.8" y="1018" width="28.6" height="4.2" fill="#212830"/><rect x="1341" y="1018" width="34.0" height="4.2" fill="#212830"/><rect x="1170.3" y="1027.3" width="12.6" height="4.1" fill="#212830"/><rect x="1187.5" y="1027.3" width="35.5" height="4.1" fill="#212830"/><rect x="1227.6" y="1027.3" width="32.1" height="4.1" fill="#212830"/><rect x="1264.3" y="1027.3" width="17.1" height="4.1" fill="#212830"/><rect x="1285.6" y="1027.3" width="17.6" height="4.1" fill="#212830"/><rect x="1307.8" y="1027.3" width="28.6" height="4.1" fill="#212830"/><rect x="1341" y="1027.3" width="34.0" height="4.1" fill="#212830"/><rect x="1170.3" y="1036" width="12.6" height="4.0" fill="#212830"/><rect x="1187.5" y="1036" width="35.5" height="4.0" fill="#212830"/><rect x="1227.6" y="1036" width="32.1" height="4.0" fill="#212830"/><rect x="1264.3" y="1036" width="17.1" height="4.0" fill="#212830"/><rect x="1285.6" y="1036" width="17.6" height="4.0" fill="#212830"/><rect x="1307.8" y="1036" width="28.6" height="4.0" fill="#212830"/><rect x="1341" y="1036" width="34.0" height="4.0" fill="#212830"/><rect x="1170.3" y="1045" width="12.6" height="4.0" fill="#212830"/><rect x="1187.5" y="1045" width="35.5" height="4.0" fill="#212830"/><rect x="1227.6" y="1045" width="32.1" height="4.0" fill="#212830"/><rect x="1264.3" y="1045" width="17.1" height="4.0" fill="#212830"/><rect x="1285.6" y="1045" width="17.6" height="4.0" fill="#212830"/><rect x="1307.8" y="1045" width="28.6" height="4.0" fill="#212830"/><rect x="1341" y="1045" width="34.0" height="4.0" fill="#212830"/><rect x="1170.3" y="1053.9" width="12.6" height="4.1" fill="#212830"/><rect x="1187.5" y="1053.9" width="35.5" height="4.1" fill="#212830"/><rect x="1227.6" y="1053.9" width="32.1" height="4.1" fill="#212830"/><rect x="1264.3" y="1053.9" width="17.1" height="4.1" fill="#212830"/><rect x="1341" y="1053.9" width="34.0" height="4.1" fill="#212830"/><rect x="1170.3" y="1062.8" width="12.6" height="4.2" fill="#212830"/><rect x="1187.5" y="1062.8" width="35.5" height="4.2" fill="#212830"/><rect x="1227.6" y="1062.8" width="32.1" height="4.2" fill="#212830"/><rect x="1264.3" y="1062.8" width="17.1" height="4.2" fill="#212830"/><rect x="1170.3" y="1071.7" width="12.6" height="4.2" fill="#212830"/><rect x="1187.5" y="1071.7" width="35.5" height="4.2" fill="#212830"/><rect x="1227.6" y="1071.7" width="32.1" height="4.2" fill="#212830"/><rect x="1264.3" y="1071.7" width="17.1" height="4.2" fill="#212830"/><rect x="1170.3" y="1080.7" width="12.6" height="4.1" fill="#212830"/><rect x="1187.5" y="1080.7" width="35.5" height="4.1" fill="#212830"/><rect x="1227.6" y="1080.7" width="32.1" height="4.1" fill="#212830"/><rect x="1264.3" y="1080.7" width="17.1" height="4.1" fill="#212830"/><rect x="1285.6" y="1053.9" width="50.8" height="4.1" fill="#212830"/><rect x="1307.8" y="1062.8" width="67.2" height="22.0" fill="#212830"/><rect x="1170.3" y="1089.5" width="12.6" height="4.8" fill="#212830"/><rect x="1187.5" y="1089.5" width="35.5" height="4.8" fill="#212830"/><rect x="1227.6" y="1089.5" width="32.1" height="4.8" fill="#212830"/><rect x="1264.3" y="1089.5" width="17.1" height="4.8" fill="#212830"/><rect x="1285.6" y="1089.5" width="89.4" height="4.8" fill="#212830"/><rect x="1378.8" y="1089.5" width="89.4" height="4.8" fill="#212830"/><rect x="1472.8" y="1089.5" width="59.6" height="4.8" fill="#212830"/><rect x="1538" y="1089.5" width="23.0" height="4.8" fill="#212830"/><text x="1172" y="988" font-family="Liberation Sans" font-weight="bold" font-size="5.5" fill="#f0f0f0" textLength="62" lengthAdjust="spacingAndGlyphs">UNLESS OTHERWISE SPECIFIED</text><text x="1172" y="993.5" font-family="Liberation Sans" font-weight="bold" font-size="5.5" fill="#f0f0f0" textLength="63" lengthAdjust="spacingAndGlyphs">DIMENSIONS ARE IN MILLIMETERS</text><text x="1172" y="999" font-family="Liberation Sans" font-weight="bold" font-size="5.5" fill="#f0f0f0" textLength="32" lengthAdjust="spacingAndGlyphs">SURFACE FINISH</text><text x="1172" y="1004.5" font-family="Liberation Sans" font-weight="bold" font-size="5.5" fill="#f0f0f0" textLength="23" lengthAdjust="spacingAndGlyphs">TOLERANCES</text><text x="1174" y="1010" font-family="Liberation Sans" font-weight="bold" font-size="5.5" fill="#f0f0f0" textLength="15" lengthAdjust="spacingAndGlyphs">LINEAR</text><text x="1174" y="1015" font-family="Liberation Sans" font-weight="bold" font-size="5.5" fill="#f0f0f0" textLength="16" lengthAdjust="spacingAndGlyphs">ANGULAR</text><text x="1243" y="987.5" font-family="Liberation Sans" font-weight="bold" font-size="5.5" fill="#f0f0f0" textLength="24" lengthAdjust="spacingAndGlyphs">SAP Material</text><text x="1343" y="987.5" font-family="Liberation Sans" font-weight="bold" font-size="5.5" fill="#f0f0f0" textLength="20" lengthAdjust="spacingAndGlyphs">DEBUR AND</text><text x="1343" y="993" font-family="Liberation Sans" font-weight="bold" font-size="5.5" fill="#f0f0f0" textLength="25" lengthAdjust="spacingAndGlyphs">BREAK SHARP</text><text x="1343" y="998.5" font-family="Liberation Sans" font-weight="bold" font-size="5.5" fill="#f0f0f0" textLength="11" lengthAdjust="spacingAndGlyphs">EDGES</text><text x="1380" y="987.5" font-family="Liberation Sans" font-weight="bold" font-size="5.5" fill="#f0f0f0" textLength="24" lengthAdjust="spacingAndGlyphs">Raw Material</text><text x="1490" y="987.5" font-family="Liberation Sans" font-weight="bold" font-size="5.5" fill="#f0f0f0" textLength="16" lengthAdjust="spacingAndGlyphs">REVISION</text><text x="1380" y="1023" font-family="Liberation Sans" font-weight="bold" font-size="5.5" fill="#f0f0f0" textLength="10" lengthAdjust="spacingAndGlyphs">TITLE</text><text x="1380" y="1068" font-family="Liberation Sans" font-weight="bold" font-size="5.5" fill="#f0f0f0" textLength="13" lengthAdjust="spacingAndGlyphs">DWG NO</text><text x="1287" y="1031" font-family="Liberation Sans" font-weight="bold" font-size="5.5" fill="#f0f0f0" textLength="12" lengthAdjust="spacingAndGlyphs">DRAWN</text><text x="1309" y="1031" font-family="Liberation Sans" font-weight="bold" font-size="5.5" fill="#f0f0f0" textLength="20" lengthAdjust="spacingAndGlyphs">24.10.2023</text><text x="1342" y="1031" font-family="Liberation Sans" font-weight="bold" font-size="5.5" fill="#f0f0f0" textLength="10" lengthAdjust="spacingAndGlyphs">FFFR</text><text x="1287" y="1040" font-family="Liberation Sans" font-weight="bold" font-size="5.5" fill="#f0f0f0" textLength="11" lengthAdjust="spacingAndGlyphs">CHK'D</text><text x="1315" y="1022" font-family="Liberation Sans" font-weight="bold" font-size="5.5" fill="#f0f0f0" textLength="10" lengthAdjust="spacingAndGlyphs">DATE</text><text x="1350" y="1022" font-family="Liberation Sans" font-weight="bold" font-size="5.5" fill="#f0f0f0" textLength="10" lengthAdjust="spacingAndGlyphs">NAME</text><text x="1289" y="1001" font-family="Liberation Sans" font-size="9" fill="#f0f0f0" text-anchor="middle">5408</text><text x="1474" y="1034.5" font-family="Liberation Sans" font-size="12.5" fill="#f4f4f4" text-anchor="middle" textLength="71" lengthAdjust="spacingAndGlyphs">Robot AutoCAD</text><text x="1464" y="1078.5" font-family="Liberation Sans" font-size="11" fill="#f4f4f4" text-anchor="middle" textLength="58" lengthAdjust="spacingAndGlyphs">10000018634-00</text><text x="1548" y="1073" font-family="Liberation Sans" font-size="9" fill="#f4f4f4" text-anchor="middle">A2</text><rect x="1286.5" y="1062" width="17.5" height="14" fill="#e0103c"/><rect x="1286.5" y="1076" width="17.5" height="9" fill="#111"/><path d="M1288 1078 L1292 1080.5 L1288 1083 Z" fill="#e0103c"/><rect x="1293" y="1081" width="9" height="3" fill="#2a6bd1"/><rect x="1296" y="1078" width="5" height="2" fill="#18a048"/><circle cx="1295.2" cy="1065" r="0.9" fill="#fff"/><circle cx="1291.2" cy="1069" r="0.9" fill="#fff"/><circle cx="1299.2" cy="1069" r="0.9" fill="#fff"/><circle cx="1295.2" cy="1073" r="0.9" fill="#fff"/><circle cx="1292.7" cy="1066.5" r="0.9" fill="#fff"/><circle cx="1297.7" cy="1066.5" r="0.9" fill="#fff"/><circle cx="1292.7" cy="1071.5" r="0.9" fill="#fff"/><circle cx="1297.7" cy="1071.5" r="0.9" fill="#fff"/><circle cx="1295.2" cy="1069" r="0.9" fill="#fff"/><text x="1308" y="1074" font-family="Liberation Sans" font-size="9" fill="#f0f0f0" textLength="24" lengthAdjust="spacingAndGlyphs" text-decoration="underline">CIDEON</text><text x="1308" y="1082" font-family="Liberation Sans" font-size="8.5" fill="#f0f0f0" textLength="66" lengthAdjust="spacingAndGlyphs">engineering digitized</text><path d="M1843 248.5 H1855" stroke="#fff" stroke-width="3"/><rect x="1868.5" y="242.5" width="9" height="9" fill="none" stroke="#fff" stroke-width="2"/><path d="M1872 239.5 H1880.5 V248" fill="none" stroke="#fff" stroke-width="1.6"/><path d="M1894 241 L1903 250.5 M1903 241 L1894 250.5" stroke="#fff" stroke-width="2.4"/><circle cx="1813.7" cy="359.2" r="65.8" fill="none" stroke="#474e57" stroke-width="17.8"/><rect x="1781" y="327" width="64.6" height="64.4" fill="#a7aaae"/><rect x="1793.2" y="339.2" width="39.6" height="39.5" fill="#a0a3aa"/><text x="1813.5" y="366.5" font-family="Liberation Sans" font-weight="bold" font-size="18" fill="#4a4f57" stroke="#4a4f57" stroke-width="0.5" text-anchor="middle" textLength="26.5" lengthAdjust="spacingAndGlyphs">TOP</text><text x="1813.2" y="299.5" font-family="Liberation Sans" font-weight="bold" font-size="27" fill="#b1b4b8" stroke="#b1b4b8" stroke-width="0.9" text-anchor="middle" textLength="15.8" lengthAdjust="spacingAndGlyphs">N</text><text x="1813.2" y="439.5" font-family="Liberation Sans" font-weight="bold" font-size="27" fill="#b1b4b8" stroke="#b1b4b8" stroke-width="0.9" text-anchor="middle" textLength="15" lengthAdjust="spacingAndGlyphs">S</text><text x="1742.3" y="369.5" font-family="Liberation Sans" font-weight="bold" font-size="27" fill="#b1b4b8" stroke="#b1b4b8" stroke-width="0.9" text-anchor="middle" textLength="24.5" lengthAdjust="spacingAndGlyphs">W</text><text x="1884" y="369.5" font-family="Liberation Sans" font-weight="bold" font-size="27" fill="#b1b4b8" stroke="#b1b4b8" stroke-width="0.9" text-anchor="middle" textLength="15.8" lengthAdjust="spacingAndGlyphs">E</text><rect x="1784.8" y="467.9" width="57.4" height="21.4" rx="4" fill="#8e9199" stroke="#a0a3aa" stroke-width="1"/><text x="1805" y="483" font-family="Liberation Sans" font-size="13" fill="#5a5d64" text-anchor="middle" textLength="30" lengthAdjust="spacingAndGlyphs">WCS</text><path d="M1826 476 H1834 L1830 480 Z" fill="#a3a6ad"/><path d="M1867.7 442.4 V519.5 M1867.7 528 V603.7 M1787.2 523.9 H1863.5 M1872 523.9 H1920" stroke="#d0d0d0" stroke-width="1.1"/><rect x="1863.8" y="520" width="7.8" height="7.8" fill="none" stroke="#e0e0e0" stroke-width="1.2"/><path d="M24 1036 V1092 M30 1097.8 H87" stroke="#d4d4d4" stroke-width="1.2"/><rect x="18.5" y="1092.5" width="11.5" height="10.5" fill="none" stroke="#d4d4d4" stroke-width="1.2"/><path d="M25 1016 L33 1024 L41 1016 M33 1024 V1031.5 M90 1081 L106 1097 M106 1081 L90 1097" stroke="#d4d4d4" stroke-width="1.2" fill="none"/></svg><div class="blk" style="left:385px;top:1087px;width:1147.6px;height:33px;background:rgba(243,243,243,0.72)"></div><div class="blk" style="left:385px;top:1087px;width:73px;height:33px;background:rgba(0,0,0,0.1)"></div><div class="blk" style="left:385px;top:1119.5px;width:1147.6px;height:1.5px;background:rgba(150,150,150,0.5)"></div><svg class="ic" style="left:385px;top:1087px" width="1148" height="33" viewBox="385 1087 1148 33">
<path d="M395.8 1093 V1115" stroke="#555" stroke-width="1.3" stroke-dasharray="1.5 2.2"/>
<path d="M407 1099.5 L417 1108.5 M417 1099.5 L407 1108.5" stroke="#3d3d3d" stroke-width="2.3"/>
<path d="M433 1111.5 L442.5 1102 M434.5 1113 L444 1103.5 M433 1111.5 A1.1 1.1 0 0 0 434.5 1113 M442.5 1102 A5.5 5.5 0 0 1 449 1094.5 L446 1098.5 L448 1100.5 L452 1097.5 A5.5 5.5 0 0 1 444 1103.5" stroke="#e6e6e6" stroke-width="1.2" fill="none"/>
<rect x="463" y="1097" width="20" height="14.5" fill="none" stroke="#555" stroke-width="1.2"/>
<rect x="463" y="1097" width="20" height="3" fill="#555"/>
<path d="M466 1103 L469 1105 L466 1107 M470 1108 H474" stroke="#555" stroke-width="1" fill="none"/>
<path d="M487 1102 H496 L491.5 1107 Z" fill="#444"/>
<path d="M1517.5 1106.5 L1522.7 1101.5 L1528 1106.5 Z" fill="#555"/>
</svg><div class="t" style="left:505.0px;top:1096.5px;font-size:15px;color:#5a5a5a;font-family:'Liberation Mono',monospace;font-style:italic;">Type a command</div>
<div class="blk" style="left:0;top:188px;width:1920px;height:35px;background:#d9d9d9"></div><div class="blk" style="left:0;top:223px;width:1920px;height:5px;background:#f2f2f2"></div><div class="blk" style="left:21px;top:200.5px;width:20px;height:2.4px;background:#5a5a5a"></div><div class="blk" style="left:21px;top:207.1px;width:20px;height:2.4px;background:#5a5a5a"></div><div class="blk" style="left:21px;top:213.7px;width:20px;height:2.4px;background:#5a5a5a"></div><svg class="ic" style="left:0;top:188px" width="400" height="40" viewBox="0 188 400 40">
<path d="M54 218 L62 197" stroke="#bdbdbd" stroke-width="1.2"/>
<path d="M112 223 L123 193 H317 L306 223 Z" fill="#f2f2f2"/>
<path d="M293 203 L303 213 M303 203 L293 213" stroke="#555" stroke-width="1.8"/>
<path d="M339.5 199 V217 M330.5 208 H348.5" stroke="#555" stroke-width="2"/>
<path d="M362 218 L370 197" stroke="#bdbdbd" stroke-width="1.2"/>
</svg><div class="t" style="left:73.0px;top:200.8px;font-size:15px;color:#3b3b3b;font-family:'Liberation Sans',sans-serif;transform:scaleX(0.978);transform-origin:0 0;">Start</div>
<div class="t" style="left:134.0px;top:200.8px;font-size:15px;color:#222;font-family:'Liberation Sans',sans-serif;font-weight:bold;transform:scaleX(0.990);transform-origin:0 0;">10000018634acd000*</div>
<div class="blk" style="left:0;top:1120px;width:1920px;height:5px;background:#f2f2f2"></div><div class="blk" style="left:0;top:1125px;width:1920px;height:36px;background:#d9d9d9"></div><div class="blk" style="left:0;top:1161px;width:1920px;height:1px;background:#8a8a8a"></div><div class="blk" style="left:0;top:1162px;width:1920px;height:1px;background:#2a2a2a"></div><div class="blk" style="left:21px;top:1132.5px;width:20px;height:2.4px;background:#5a5a5a"></div><div class="blk" style="left:21px;top:1139.3px;width:20px;height:2.4px;background:#5a5a5a"></div><div class="blk" style="left:21px;top:1146.1px;width:20px;height:2.4px;background:#5a5a5a"></div><svg class="ic" style="left:0;top:1120px" width="400" height="43" viewBox="0 1120 400 43">
<path d="M53 1155 L64 1124 H139 L128 1155 Z" fill="#f2f2f2"/>
<path d="M213 1151 L221 1130 M296 1151 L304 1130 M348 1151 L356 1130" stroke="#bdbdbd" stroke-width="1.2"/>
<path d="M325.5 1132 V1150 M316.5 1141 H334.5" stroke="#555" stroke-width="2"/>
</svg><div class="t" style="left:74.0px;top:1133.8px;font-size:15px;color:#222;font-family:'Liberation Sans',sans-serif;font-weight:bold;transform:scaleX(1.016);transform-origin:0 0;">Model</div>
<div class="t" style="left:148.0px;top:1133.8px;font-size:15px;color:#3b3b3b;font-family:'Liberation Sans',sans-serif;transform:scaleX(0.974);transform-origin:0 0;">Layout1</div>
<div class="t" style="left:231.0px;top:1133.8px;font-size:15px;color:#3b3b3b;font-family:'Liberation Sans',sans-serif;transform:scaleX(0.974);transform-origin:0 0;">Layout2</div>
<div class="blk" style="left:1282px;top:1128px;width:60px;height:30px;background:#efefef"></div><div class="blk" style="left:1347px;top:1128px;width:212px;height:30px;background:#efefef"></div><div class="blk" style="left:1564px;top:1128px;width:50px;height:30px;background:#efefef"></div><div class="blk" style="left:1616px;top:1128px;width:30px;height:30px;background:#efefef"></div><div class="blk" style="left:1650px;top:1128px;width:31px;height:30px;background:#efefef"></div><div class="blk" style="left:1686px;top:1128px;width:92px;height:30px;background:#efefef"></div><div class="blk" style="left:1780px;top:1128px;width:102px;height:30px;background:#efefef"></div><div class="blk" style="left:1888px;top:1128px;width:30px;height:30px;background:#efefef"></div><div class="blk" style="left:1378px;top:1129px;width:29px;height:28px;background:#cce4f7;border:1px solid #7eb4ea"></div><div class="blk" style="left:1480px;top:1129px;width:28px;height:28px;background:#cce4f7;border:1px solid #7eb4ea"></div><div class="blk" style="left:1510px;top:1129px;width:28px;height:28px;background:#cce4f7;border:1px solid #7eb4ea"></div><div class="blk" style="left:1746px;top:1129px;width:29px;height:28px;background:#cce4f7;border:1px solid #7eb4ea"></div><div class="t" style="left:1287.0px;top:1136.3px;font-size:15px;color:#333;font-family:'Liberation Sans',sans-serif;transform:scaleX(0.956);transform-origin:0 0;">MODEL</div>
<svg class="ic" style="left:1340px;top:1120px" width="580" height="43" viewBox="1340 1120 580 43">
<path d="M1352.5 1133 V1153 H1372" stroke="#666" stroke-width="1.3" fill="none"/>
<rect x="1352.5" y="1146" width="6" height="7" stroke="#666" stroke-width="1.2" fill="none"/>
<circle cx="1390" cy="1143" r="8" stroke="#555" stroke-width="1.4" fill="none"/>
<path d="M1390 1143 L1399 1135 M1390 1143 H1402" stroke="#555" stroke-width="1.3"/>
<path d="M1413 1141 H1421 L1417 1146 Z M1462 1141 H1470 L1466 1146 Z M1545 1141 H1553 L1549 1146 Z M1599 1141 H1607 L1603 1146 Z" fill="#444"/>
<path d="M1435 1135 L1450 1150" stroke="#e53935" stroke-width="1.3"/>
<path d="M1442.5 1133 V1153" stroke="#43a047" stroke-width="1.3"/>
<rect x="1441" y="1141" width="3" height="3" fill="#fff" stroke="#444" stroke-width="0.8"/>
<path d="M1484 1152 L1498 1137 M1484 1152 H1504" stroke="#444" stroke-width="1.3"/>
<rect x="1491" y="1142" width="3" height="3" fill="#222"/>
<rect x="1514.5" y="1136" width="18" height="17" stroke="#555" stroke-width="1.3" fill="none"/>
<rect x="1514" y="1133" width="5" height="5" stroke="#555" stroke-width="1.1" fill="#cce4f7"/>
<path d="M1588.3 1140.8 L1588.3 1145.2 L1585.3 1145.6 L1585.1 1146.0 L1586.9 1148.4 L1583.9 1151.4 L1581.5 1149.6 L1581.1 1149.8 L1580.7 1152.8 L1576.3 1152.8 L1575.9 1149.8 L1575.5 1149.6 L1573.1 1151.4 L1570.1 1148.4 L1571.9 1146.0 L1571.7 1145.6 L1568.7 1145.2 L1568.7 1140.8 L1571.7 1140.4 L1571.9 1140.0 L1570.1 1137.6 L1573.1 1134.6 L1575.5 1136.4 L1575.9 1136.2 L1576.3 1133.2 L1580.7 1133.2 L1581.1 1136.2 L1581.5 1136.4 L1583.9 1134.6 L1586.9 1137.6 L1585.1 1140.0 L1585.3 1140.4 Z" fill="#555"/><circle cx="1578.5" cy="1143" r="3.2" fill="#efefef"/>
<path d="M1630.5 1133 V1153 M1621 1143 H1640" stroke="#555" stroke-width="2"/>
<rect x="1656" y="1134" width="8" height="8" stroke="#555" stroke-width="1.1" fill="none"/>
<circle cx="1671" cy="1142" r="4" stroke="#555" stroke-width="1.1" fill="none"/>
<path d="M1659 1153 L1663 1146 L1667 1153 Z" stroke="#555" stroke-width="1.1" fill="none"/>
<rect x="1692" y="1135" width="8" height="8" fill="#555"/><rect x="1692" y="1144" width="8" height="8" fill="#555"/><rect x="1701" y="1144" width="8" height="8" fill="#555"/>
<rect x="1725" y="1138" width="7" height="7" fill="#555"/><rect x="1729" y="1145" width="7" height="7" fill="#555"/>
<path d="M1721 1136 H1727 M1724 1133 V1139" stroke="#555" stroke-width="1"/>
<path d="M1738 1143 A3 3 0 0 1 1744 1143" stroke="#555" stroke-width="1" fill="none"/>
<rect x="1733" y="1146" width="8" height="6" fill="#444"/>
<path d="M1756 1150 V1138 A2.5 2.5 0 0 1 1761 1138 V1149" stroke="#555" stroke-width="1.2" fill="none"/>
<rect x="1760" y="1146" width="9" height="7" fill="#444"/>
<rect x="1788" y="1134" width="17" height="15" fill="#f9d9c0"/>
<path d="M1792 1137 H1800 M1796 1137 V1148 M1792 1148 H1800" stroke="#d57b2a" stroke-width="2.5"/>
<circle cx="1800" cy="1152" r="2.2" fill="none" stroke="#e98b50" stroke-width="1"/><circle cx="1805" cy="1152" r="2.2" fill="none" stroke="#e98b50" stroke-width="1"/>
<path d="M1816 1128 H1834 L1841 1135 V1143 H1816 Z" fill="#2f6bb3"/>
<path d="M1816 1143 H1841 V1154 H1816 Z" fill="#f0b429"/>
<path d="M1821 1128 V1143 M1816 1135 H1830" stroke="#bcd" stroke-width="1"/>
<path d="M1837 1142 L1845 1157 H1829 Z" fill="#f5c518" stroke="#444" stroke-width="0.6"/>
<rect x="1836.3" y="1146" width="1.5" height="5" fill="#222"/><rect x="1836.3" y="1153" width="1.5" height="1.5" fill="#222"/>
<rect x="1855.5" y="1133.5" width="18" height="17" fill="none" stroke="#555" stroke-width="1.1"/>
<path d="M1856 1148 Q1862 1133 1866 1141 L1872 1152" stroke="#555" stroke-width="1" fill="none"/>
<circle cx="1860" cy="1136" r="1.2" fill="#1e88e5"/>
<path d="M1868 1146 L1873 1155 H1863 Z" fill="#f57c00"/>
<path d="M1893 1135.2 H1913 M1893 1142.9 H1913 M1893 1150.4 H1913" stroke="#5f5f5f" stroke-width="2.4"/>
</svg><div class="blk" style="left:0;top:0;width:1px;height:1163px;background:#a0a0a0"></div><div class="blk" style="left:1917px;top:228px;width:2px;height:892px;background:#f0f0f0"></div><div class="blk" style="left:1919px;top:0;width:1px;height:1163px;background:#b4b4b4"></div></body></html>
